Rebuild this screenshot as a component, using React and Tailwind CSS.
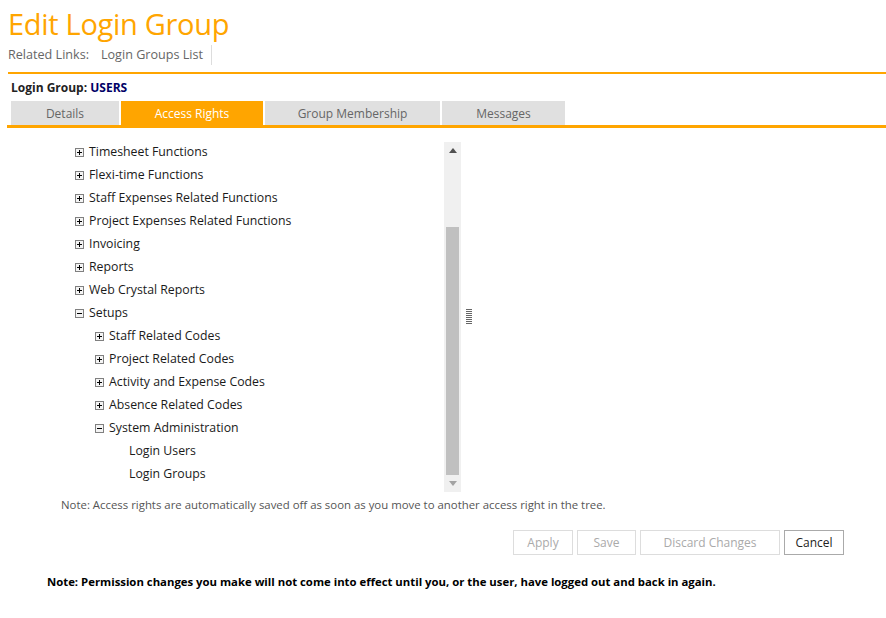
import React from 'react';

const tree = [
  { label: 'Timesheet Functions', level: 0, icon: 'plus' },
  { label: 'Flexi-time Functions', level: 0, icon: 'plus' },
  { label: 'Staff Expenses Related Functions', level: 0, icon: 'plus' },
  { label: 'Project Expenses Related Functions', level: 0, icon: 'plus' },
  { label: 'Invoicing', level: 0, icon: 'plus' },
  { label: 'Reports', level: 0, icon: 'plus' },
  { label: 'Web Crystal Reports', level: 0, icon: 'plus' },
  { label: 'Setups', level: 0, icon: 'minus' },
  { label: 'Staff Related Codes', level: 1, icon: 'plus' },
  { label: 'Project Related Codes', level: 1, icon: 'plus' },
  { label: 'Activity and Expense Codes', level: 1, icon: 'plus' },
  { label: 'Absence Related Codes', level: 1, icon: 'plus' },
  { label: 'System Administration', level: 1, icon: 'minus' },
  { label: 'Login Users', level: 2 },
  { label: 'Login Groups', level: 2 },
];

const indent = ['pl-[5px]', 'pl-[25px]', 'pl-[59px]'];

function Toggle({ kind }) {
  return (
    <svg width="9" height="9" viewBox="0 0 9 9" className="mr-[5px] shrink-0">
      <rect x="0.5" y="0.5" width="8" height="8" fill="#f4f4f4" stroke="#808080" />
      <path d="M2 4.5h5" stroke="#000" />
      {kind === 'plus' && <path d="M4.5 2v5" stroke="#000" />}
    </svg>
  );
}

function Tab({ label, active, width }) {
  return (
    <div
      className={`${width} h-[24px] pt-[2px] flex items-center justify-center text-[12px] ${
        active ? 'bg-[#ffa500] text-white' : 'bg-[#e0e0e0] text-[#666]'
      }`}
    >
      {label}
    </div>
  );
}

export default function App() {
  return (
    <div className="w-[886px] h-[618px] bg-white font-['Open_Sans',sans-serif] text-[#222] overflow-hidden">
      <div className="pl-[8px] pt-[5px]">
        <h1 className="text-[29px] leading-[38px] text-[#ffa500] tracking-[-0.3px]">Edit Login Group</h1>
        <div className="flex items-center mt-[2px] h-[20px] text-[12.6px] text-[#666]">
          <span>Related Links:</span>
          <span className="ml-[12px] pr-[8px] border-r border-[#ddd] h-[20px] flex items-center">Login Groups List</span>
        </div>
      </div>
      <div className="ml-[8px] mt-[7px] h-[2px] bg-[#ffa500]" />

      <div className="pl-[11px] pt-[6px] text-[12px] font-bold text-[#222] leading-[16px]">
        Login Group: <span className="text-[#000066]">USERS</span>
      </div>
      <div className="flex gap-[2px] pl-[11px] mt-[5px]">
        <Tab label="Details" width="w-[108px]" />
        <Tab label="Access Rights" width="w-[142px]" active />
        <Tab label="Group Membership" width="w-[175px]" />
        <Tab label="Messages" width="w-[123px]" />
      </div>
      <div className="ml-[7px] h-[3px] bg-[#ffa500]" />

      <div className="flex mt-[14px]">
        <div className="ml-[70px] w-[374px] h-[350px] -mt-[1px] text-[12.3px] text-[#1a1a1a]">
          {tree.map((n) => (
            <div key={n.label} className={`h-[23px] flex items-center ${indent[n.level]}`}>
              {n.icon && <Toggle kind={n.icon} />}
              <span>{n.label}</span>
            </div>
          ))}
        </div>
        <div className="w-[17px] h-[350px] bg-[#f0f0f0] flex flex-col items-center">
          <div className="h-[17px] flex items-center justify-center">
            <svg width="8" height="5" viewBox="0 0 8 5"><path d="M4 0L8 5H0z" fill="#505050" /></svg>
          </div>
          <div className="h-[68px]" />
          <div className="w-[13px] h-[248px] bg-[#c0c0c0]" />
          <div className="h-[17px] flex items-center justify-center">
            <svg width="8" height="5" viewBox="0 0 8 5"><path d="M0 0H8L4 5z" fill="#a3a3a3" /></svg>
          </div>
        </div>
        <div className="ml-[5px] mt-[167px] flex flex-col gap-[1px]">
          {Array.from({ length: 8 }).map((_, i) => (
            <div key={i} className="w-[6px] h-[1px] bg-[#666]" />
          ))}
        </div>
      </div>

      <div className="pl-[61px] mt-[5px] text-[11.4px] text-[#555] leading-[16px]">
        Note: Access rights are automatically saved off as soon as you move to another access right in the tree.
      </div>

      <div className="flex justify-end gap-[4px] pr-[42px] mt-[17px] text-[12px]">
        <button className="w-[60px] h-[25px] border border-[#ddd] text-[#aaa] bg-white">Apply</button>
        <button className="w-[59px] h-[25px] border border-[#ddd] text-[#aaa] bg-white">Save</button>
        <button className="w-[140px] h-[25px] border border-[#ddd] text-[#aaa] bg-white">Discard Changes</button>
        <button className="w-[60px] h-[25px] border border-[#aaa] text-[#222] bg-white">Cancel</button>
      </div>

      <div className="pl-[47px] mt-[19px] text-[11.35px] font-bold text-black leading-[16px]">
        Note: Permission changes you make will not come into effect until you, or the user, have logged out and back in again.
      </div>
    </div>
  );
}
